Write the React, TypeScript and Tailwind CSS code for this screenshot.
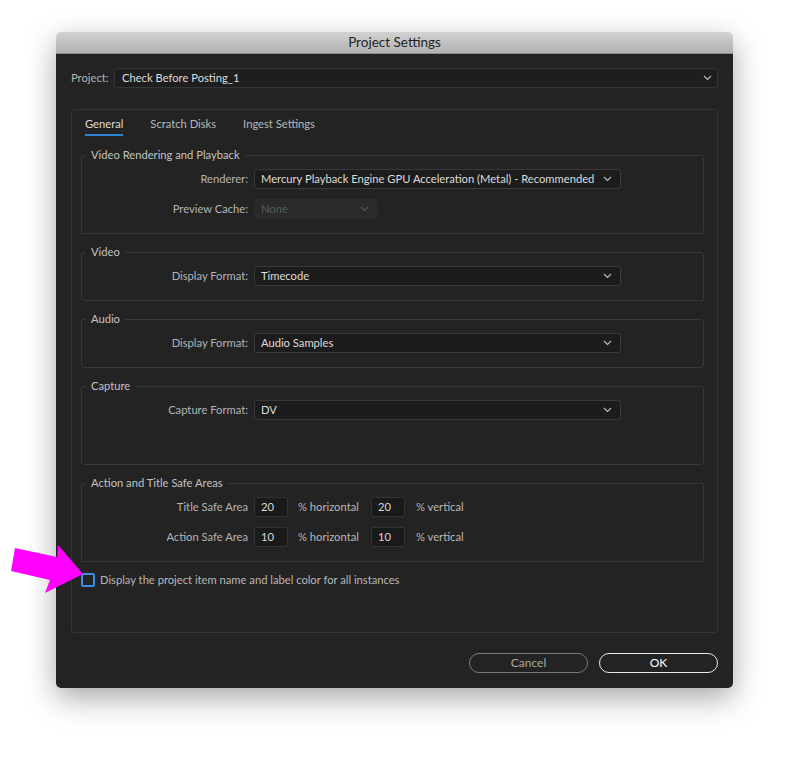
import React from 'react';

const Chevron = ({ dim = false }: { dim?: boolean }) => (
  <svg width="9" height="6" viewBox="0 0 9 6" className={dim ? 'opacity-30' : ''}>
    <polyline points="1,1 4.5,4.5 8,1" fill="none" stroke="#bdbdbd" strokeWidth="1.1" />
  </svg>
);

const Select = ({ value, width = 'w-[367px]', disabled = false }: { value: string; width?: string; disabled?: boolean }) => (
  <div
    className={`${width} h-5 flex items-center justify-between pl-[6px] pr-[8px] rounded-[3px] border whitespace-nowrap ${
      disabled ? 'border-[#2a2a2a] bg-[#2a2a2a] text-[#5a5a5a]' : 'border-[#3a3a3a] bg-[#1c1c1c] text-[#dcdcdc]'
    }`}
  >
    <span>{value}</span>
    <Chevron dim={disabled} />
  </div>
);

const Group = ({ title, children, className = '' }: { title: string; children: React.ReactNode; className?: string }) => (
  <fieldset className={`border border-[#383838] rounded-[3px] pl-0 pr-0 pt-[7px] ${className}`}>
    <legend className="ml-[4px] px-[5px] text-[#c4c4c4] leading-[14px]">{title}</legend>
    {children}
  </fieldset>
);

const Row = ({ label, children }: { label: string; children: React.ReactNode }) => (
  <div className="flex items-center h-5">
    <span className="w-[166px] text-right text-[#b4b4b4]">{label}</span>
    <div className="ml-[6px] flex items-center">{children}</div>
  </div>
);

const SmallInput = ({ value }: { value: string }) => (
  <div className="w-[34px] h-5 flex items-center pl-[6px] bg-[#1a1a1a] border border-[#333] rounded-[2px] text-[#d8d8d8]">{value}</div>
);

export default function App() {
  return (
    <div className="relative w-[789px] h-[769px] bg-white pt-[32px] pl-[56px] font-['Lato',sans-serif] text-[11.2px]">
      {/* window */}
      <div className="w-[677px] h-[656px] rounded-[5px] overflow-hidden shadow-[0_10px_30px_rgba(0,0,0,0.35)] flex flex-col">
        <div className="h-[22px] flex items-center justify-center bg-gradient-to-b from-[#d2d2d2] to-[#b2b2b2] text-[#222] text-[13.5px] border-b border-[#8a8a8a]">
          Project Settings
        </div>
        <div className="flex-1 bg-[#232323] px-[15px] pt-[14px]">
          {/* project row */}
          <div className="flex items-center h-5">
            <span className="text-[#b4b4b4] w-[43px]">Project:</span>
            <div className="flex-1 h-5 flex items-center justify-between pl-[7px] pr-[5px] rounded-[3px] border border-[#353535] bg-[#1e1e1e] text-[#dcdcdc]">
              <span>Check Before Posting_1</span>
              <Chevron />
            </div>
          </div>

          {/* main panel */}
          <div className="mt-[21px] h-[524px] border border-[#353535] rounded-[3px] pl-[9px] pr-[13px]">
            <div className="flex gap-[27px] pl-[4px] pt-[6px] h-[38px] text-[#b8b8b8]">
              <span className="relative h-[20px] text-[#dcdcdc]">
                General
                <span className="absolute left-0 right-0 bottom-0 h-[2px] bg-[#2f83d6]" />
              </span>
              <span>Scratch Disks</span>
              <span>Ingest Settings</span>
            </div>

            <div className="flex flex-col">
              <Group title="Video Rendering and Playback" className="h-[86px]">
                <div className="flex flex-col gap-[10px]">
                  <Row label="Renderer:">
                    <Select value="Mercury Playback Engine GPU Acceleration (Metal) - Recommended" />
                  </Row>
                  <Row label="Preview Cache:">
                    <Select value="None" width="w-[124px]" disabled />
                  </Row>
                </div>
              </Group>
              <Group title="Video" className="h-[56px] mt-[11px]">
                <Row label="Display Format:">
                  <Select value="Timecode" />
                </Row>
              </Group>
              <Group title="Audio" className="h-[56px] mt-[11px]">
                <Row label="Display Format:">
                  <Select value="Audio Samples" />
                </Row>
              </Group>
              <Group title="Capture" className="h-[86px] mt-[11px]">
                <Row label="Capture Format:">
                  <Select value="DV" />
                </Row>
              </Group>
              <Group title="Action and Title Safe Areas" className="h-[86px] mt-[11px]">
                <div className="flex flex-col gap-[10px]">
                  {[
                    ['Title Safe Area', '20'],
                    ['Action Safe Area', '10'],
                  ].map(([label, v]) => (
                    <Row key={label} label={label}>
                      <SmallInput value={v} />
                      <span className="ml-[10px] w-[73px] text-[#b8b8b8]">% horizontal</span>
                      <SmallInput value={v} />
                      <span className="ml-[11px] text-[#b8b8b8]">% vertical</span>
                    </Row>
                  ))}
                </div>
              </Group>

              <label className="mt-[10px] flex items-center gap-[5px] text-[#b8b8b8]">
                <span className="block w-[14px] h-[14px] border-2 border-[#3b8fe4] rounded-[2px]" />
                Display the project item name and label color for all instances
              </label>
            </div>
          </div>

          {/* buttons */}
          <div className="mt-[20px] flex justify-end gap-[11px]">
            <button className="w-[119px] h-[20px] rounded-full border-[1.5px] border-[#7a7a7a] text-[#a8a8a8] text-[12px]">Cancel</button>
            <button className="w-[119px] h-[20px] rounded-full border-[1.5px] border-[#e8e8e8] text-white text-[12px]">OK</button>
          </div>
        </div>
      </div>

      {/* annotation arrow */}
      <svg className="absolute left-0 top-0" width="100" height="610" viewBox="0 0 100 610">
        <polygon points="15,548 57,557 58,545 83,574 45,593 50,580 11,571" fill="#ff00ff" />
      </svg>
    </div>
  );
}
